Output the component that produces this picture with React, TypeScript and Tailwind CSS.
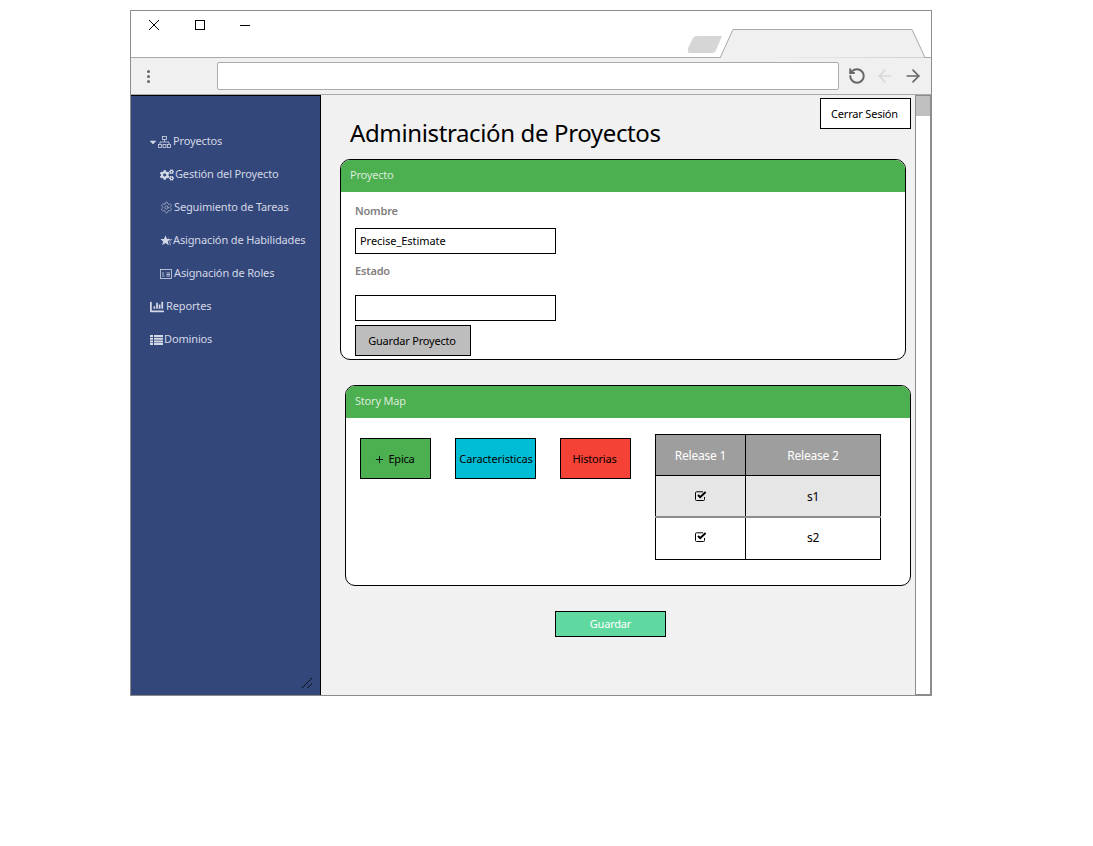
import { ArrowLeft, ArrowRight, Plus, RotateCcw, Settings } from "lucide-react";
import { FaCaretDown, FaChartBar, FaCogs } from "react-icons/fa";

const font = "font-['Noto_Sans','Liberation_Sans',sans-serif]";

function SitemapIcon() {
  return (
    <svg width="13" height="12" viewBox="0 0 13 12" fill="none" stroke="currentColor" strokeWidth="0.8">
      <rect x="4.5" y="0.5" width="4" height="3" />
      <path d="M6.5 3.5V6M2 8V6H11V8" />
      <rect x="0.5" y="8.5" width="3" height="3" />
      <rect x="5" y="8.5" width="3" height="3" />
      <rect x="9.5" y="8.5" width="3" height="3" />
    </svg>
  );
}

function StarIcon() {
  return (
    <svg width="13" height="12" viewBox="0 0 13 12" fill="currentColor" className="-mr-[2px]">
      <path d="M5.5 0.5L7 4H10.6L7.8 6.4L8.8 10.2L5.5 8.1L2.2 10.2L3.2 6.4L0.4 4H4Z" />
      <path d="M8 1.2L9 4H12.6L10 6.4L11 10.4L9.8 9.7L9.2 6.2L11.2 4.6H8.6Z" opacity="0.75" />
    </svg>
  );
}

function IdCardIcon() {
  return (
    <svg width="12" height="10" viewBox="0 0 12 10" fill="none" stroke="currentColor" strokeWidth="0.8">
      <rect x="0.5" y="0.5" width="11" height="9" />
      <path d="M3 3V6M2 7H4.5" />
      <path d="M6.5 4H10M6.5 5.5H10M6.5 7H10" />
    </svg>
  );
}

function ListIcon() {
  return (
    <svg width="13" height="10" viewBox="0 0 13 10" fill="currentColor" className="-mr-px">
      <path d="M0 0H3V2H0ZM4 0H13V2H4ZM0 2.7H3V4.7H0ZM4 2.7H13V4.7H4ZM0 5.4H3V7.4H0ZM4 5.4H13V7.4H4ZM0 8H3V10H0ZM4 8H13V10H4Z" />
    </svg>
  );
}

function CheckIcon() {
  return (
    <svg width="12" height="10" viewBox="0 0 12 10" fill="none" stroke="currentColor" className="mx-auto -mt-[2px]">
      <path d="M9.5 6V8.5Q9.5 9.5 8.5 9.5H1.5Q0.5 9.5 0.5 8.5V1.8Q0.5 0.8 1.5 0.8H8" strokeWidth="1" />
      <path d="M3 4L5.2 6.2L10.6 1" strokeWidth="2" />
    </svg>
  );
}

function NavItem({ icon, label, indent }: { icon: React.ReactNode; label: string; indent?: boolean }) {
  return (
    <div
      className={`flex h-[33px] items-center gap-[2px] text-[11px] tracking-[-0.14px] text-[#d3d8e6] ${indent ? "pl-[29px]" : "pl-[19px]"}`}
    >
      {icon}
      <span>{label}</span>
    </div>
  );
}

function Panel({ title, className, children }: { title: string; className: string; children: React.ReactNode }) {
  return (
    <section className={`h-[201px] w-[566px] overflow-hidden rounded-[10px] border border-black bg-white ${className}`}>
      <div className="flex h-[32px] items-center bg-[#4caf50] pb-[2px] pl-[9px] text-[11px] text-[#d8ebd8]">{title}</div>
      {children}
    </section>
  );
}

export default function App() {
  return (
    <div className={`min-h-[846px] bg-white pl-[130px] pt-[10px] tracking-[-0.2px] ${font}`}>
      <div className="flex h-[686px] w-[802px] flex-col border border-[#8c8c8c]">
        <div className="flex h-[47px] shrink-0 border-b border-[#aaaaaa] bg-white">
          <div className="flex h-[28px] items-center text-black">
            <svg width="12" height="12" viewBox="0 0 12 12" className="ml-[17px]" fill="none" stroke="currentColor">
              <path d="M1 1l10 10M11 1L1 11" />
            </svg>
            <div className="ml-[35px] h-[10px] w-[10px] border border-black" />
            <div className="ml-[35px] h-px w-[10px] bg-black" />
          </div>
          <svg width="245" height="47" viewBox="0 0 245 47" className="ml-auto shrink-0" fill="none">
            <path d="M2 41Q1 38 3 35L7 27Q8 25 11 25H36L30 39Q29 42 26 42H4Q2 42 2 41Z" fill="#d6d6d6" />
            <path d="M34 47L47 18.5H226L239 46.5H245" fill="#f0f0f0" stroke="#a8a8a8" />
          </svg>
        </div>

        <div className="flex h-[37px] shrink-0 items-center border-b border-[#aaaaaa] bg-[#f0f0f0]">
          <div className="ml-[16px] flex w-[3px] flex-col gap-[2px]">
            <div className="h-[3px] rounded-full bg-[#666666]" />
            <div className="h-[3px] rounded-full bg-[#666666]" />
            <div className="h-[3px] rounded-full bg-[#666666]" />
          </div>
          <div className="ml-[67px] h-[28px] w-[622px] rounded-[2px] border border-[#aaaaaa] bg-white" />
          <RotateCcw size={18} strokeWidth={2.6} className="ml-[9px] text-[#666666]" />
          <ArrowLeft size={20} strokeWidth={2} className="ml-[9px] text-[#d8d8d8]" />
          <ArrowRight size={20} strokeWidth={2} className="ml-[8px] text-[#666666]" />
        </div>

        <div className="flex min-h-0 flex-1">
          <aside className="relative w-[190px] shrink-0 border-r border-t border-black bg-[#34477a] pt-[29px]">
            <NavItem
              label="Proyectos"
              icon={
                <span className="flex items-center">
                  <FaCaretDown size={10} className="-ml-[2px] -mr-[0px]" />
                  <SitemapIcon />
                </span>
              }
            />
            <NavItem indent label="Gestión del Proyecto" icon={<FaCogs size={14} className="-mr-px" />} />
            <NavItem indent label="Seguimiento de Tareas" icon={<Settings size={13} strokeWidth={1} className="-mr-px" />} />
            <NavItem indent label="Asignación de Habilidades" icon={<StarIcon />} />
            <NavItem indent label="Asignación de Roles" icon={<IdCardIcon />} />
            <NavItem label="Reportes" icon={<FaChartBar size={14} />} />
            <NavItem label="Dominios" icon={<ListIcon />} />
            <svg width="10" height="10" viewBox="0 0 10 10" className="absolute bottom-[7px] right-[8px]" stroke="#000000" fill="none">
              <path d="M0 10L10 0M5.5 10L10 5.5" strokeDasharray="2 0.5" />
            </svg>
          </aside>

          <main className="min-w-0 flex-1 bg-[#f1f1f1]">
            <header className="flex h-[64px] items-start justify-between">
              <h1 className="pl-[29px] pt-[18px] text-[24px] leading-[40px] tracking-[-0.37px] text-black">
                Administración de Proyectos
              </h1>
              <button className="mr-[4px] mt-[3px] h-[31px] w-[91px] border border-black bg-white pr-[2px] pt-px text-[11px] text-black">
                Cerrar Sesión
              </button>
            </header>

            <Panel title="Proyecto" className="ml-[19px]">
              <div className="px-[14px] pt-[11px] text-[11px]">
                <div className="h-[16px] font-semibold leading-[16px] text-[#808080]">Nombre</div>
                <input
                  readOnly
                  value="Precise_Estimate"
                  className="mt-[9px] block h-[26px] w-[201px] border border-black bg-white px-[4px] pb-px text-[11px] tracking-[-0.05px] text-black outline-none"
                />
                <div className="mt-[9px] h-[16px] font-semibold leading-[16px] text-[#808080]">Estado</div>
                <input readOnly className="mt-[16px] block h-[26px] w-[201px] border border-black bg-white" />
                <button className="mt-[4px] h-[31px] w-[116px] border border-black bg-[#bdbdbd] pr-[2px] pt-[2px] text-[11px] text-black">
                  Guardar Proyecto
                </button>
              </div>
            </Panel>

            <Panel title="Story Map" className="ml-[24px] mt-[25px]">
              <div className="flex items-start pl-[14px] pt-[16px] text-[11px] text-black">
                <button className="mt-[4px] flex h-[41px] w-[71px] items-center justify-center gap-[3px] border border-black bg-[#4caf50] pr-[2px] pt-px">
                  <Plus size={11} strokeWidth={1.8} />
                  Epica
                </button>
                <button className="ml-[24px] mt-[4px] h-[41px] w-[81px] border border-black bg-[#00bcd4] pl-px pt-px tracking-[-0.13px]">
                  Caracteristicas
                </button>
                <button className="ml-[24px] mt-[4px] h-[41px] w-[71px] border border-black bg-[#f44336] pr-[2px] pt-px">Historias</button>
                <table className="ml-[24px] w-[226px] table-fixed border-collapse text-[12px]">
                  <tbody>
                    <tr className="h-[41px] bg-[#9e9e9e] text-white">
                      <td className="w-[90px] border border-black pt-[2px] text-center">Release 1</td>
                      <td className="border border-black pt-[2px] text-center">Release 2</td>
                    </tr>
                    <tr className="h-[41px] bg-[#e6e6e6]">
                      <td className="border-x border-black pt-[2px] text-center">
                        <CheckIcon />
                      </td>
                      <td className="border-x border-black pt-[2px] text-center">s1</td>
                    </tr>
                    <tr className="h-[43px] bg-white">
                      <td className="border border-black border-t-2 border-t-[#8c8c8c] text-center">
                        <CheckIcon />
                      </td>
                      <td className="border border-black border-t-2 border-t-[#8c8c8c] text-center">s2</td>
                    </tr>
                  </tbody>
                </table>
              </div>
            </Panel>

            <div className="ml-[234px] mt-[24px]">
              <button className="h-[26px] w-[111px] border border-black bg-[#60d9a0] pt-px text-[11px] text-white">Guardar</button>
            </div>
          </main>

          <div className="flex w-[16px] shrink-0 flex-col border border-[#8c8c8c] bg-white">
            <div className="h-[20px] bg-[#c0c0c0]" />
          </div>
        </div>
      </div>
    </div>
  );
}
